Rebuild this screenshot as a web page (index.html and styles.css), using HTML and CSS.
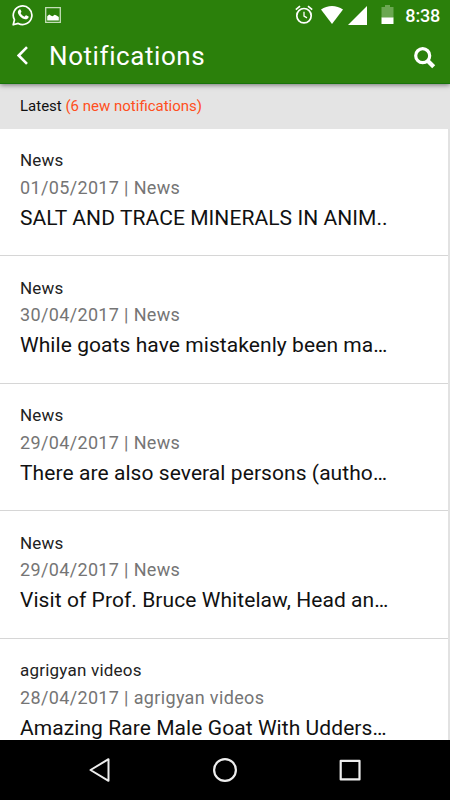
FILE: index.html
```html
<!DOCTYPE html>
<html lang="en">

<head>
    <meta charset="UTF-8" />
    <meta name="viewport" content="width=device-width, initial-scale=1.0" />
    <title>Notifications</title>
    <link rel="stylesheet" href="styles.css">
</head>

<body>

    <div class="screen">
        <header class="header">
            <div class="status">
                <svg class="status__whatsapp" width="22" height="22" viewBox="0 0 22 22" fill="none">
                    <path d="M1.2 20.8 2.5 15.8A9.3 9.3 0 1 1 6.2 19.4Z" stroke="#fff" stroke-width="1.7" stroke-linejoin="round" />
                    <path d="M7.4 5.6c.5-.4 1-.3 1.3.3l.7 1.7c.2.5-.5 1.1-.8 1.5.8 1.7 2.1 2.9 3.9 3.7l1.1-1.3c.3-.3.6-.3 1-.1l1.6.8c.6.3.5.7.3 1.3-.5 1.4-2 2-3.4 1.7-3.5-.8-6-3.1-7.1-6-.5-1.4.3-2.9 1.4-3.6Z" fill="#fff" />
                </svg>
                <svg class="status__image" width="16" height="16" viewBox="0 0 16 16">
                    <path d="M.7.7h14.6v14.6H.7Z" fill="none" stroke="#c4deb8" stroke-width="1.3" />
                    <path d="M2.2 13.5V9.3l2-1.8 2 1.3 1.3.5 2.2-1.5 1.8.8 2.3 1.5v3.4Z" fill="#fff" />
                </svg>
                <svg class="status__alarm" width="18" height="19" viewBox="0 0 18 19" fill="none" stroke="#fff">
                    <circle cx="9" cy="10.7" r="7.2" stroke-width="1.7" />
                    <path d="M9 6.8v4.3l3 1.8" stroke-width="1.3" />
                    <path d="M.8 4.6 5 1.2M17.2 4.6 13 1.2" stroke-width="1.7" />
                </svg>
                <svg class="status__wifi" width="22" height="18" viewBox="0 0 22 18">
                    <path d="M0 3.6C6.5-1.2 15.5-1.2 22 3.6L11 18Z" fill="#fff" />
                </svg>
                <svg class="status__signal" width="19" height="19" viewBox="0 0 19 19">
                    <path d="M0 19 19 0v19Z" fill="#fff" />
                </svg>
                <svg class="status__battery" width="13" height="19" viewBox="0 0 13 19">
                    <path d="M4 0h5v2h3.5v11H.5V2H4Z" fill="#6ba752" />
                    <path d="M.5 12.5h12V19H.5Z" fill="#fff" />
                </svg>
                <span class="status__time">8:38</span>
            </div>
            <div class="toolbar">
                <svg class="toolbar__back" width="12" height="19" viewBox="0 0 12 19" fill="none">
                    <path d="M10 1.2 1.7 9.5l8.3 8.3" stroke="#fff" stroke-width="2.6" />
                </svg>
                <h1 class="toolbar__title">Notifications</h1>
                <svg class="toolbar__search" width="22" height="22" viewBox="0 0 22 22" fill="none" stroke="#fff">
                    <circle cx="8.7" cy="8.7" r="7" stroke-width="3.2" />
                    <path d="m13.7 13.7 6 6" stroke-width="4.2" />
                </svg>
            </div>
        </header>

        <div class="latest">Latest <span class="latest__count">(6 new notifications)</span></div>

        <ul class="list">
            <li class="item">
                <p class="item__type">News</p>
                <p class="item__date">01/05/2017 | News</p>
                <h2 class="item__title">SALT AND TRACE MINERALS IN ANIM..</h2>
            </li>
            <li class="item">
                <p class="item__type">News</p>
                <p class="item__date">30/04/2017 | News</p>
                <h2 class="item__title">While goats have mistakenly been ma…</h2>
            </li>
            <li class="item">
                <p class="item__type">News</p>
                <p class="item__date">29/04/2017 | News</p>
                <h2 class="item__title">There are also several persons (autho…</h2>
            </li>
            <li class="item">
                <p class="item__type">News</p>
                <p class="item__date">29/04/2017 | News</p>
                <h2 class="item__title">Visit of Prof. Bruce Whitelaw, Head an…</h2>
            </li>
            <li class="item">
                <p class="item__type">agrigyan videos</p>
                <p class="item__date">28/04/2017 | agrigyan videos</p>
                <h2 class="item__title">Amazing Rare Male Goat With Udders…</h2>
            </li>
        </ul>

        <nav class="navbar">
            <svg width="24" height="26" viewBox="0 0 24 26" fill="none" stroke="#eee" stroke-width="2" stroke-linejoin="round">
                <path d="M21.5 2.2v21.6L3.5 13Z" />
            </svg>
            <svg width="26" height="26" viewBox="0 0 26 26" fill="none" stroke="#eee" stroke-width="2.2">
                <circle cx="13" cy="13" r="10.9" />
            </svg>
            <svg width="24" height="26" viewBox="0 0 24 26" fill="none" stroke="#eee" stroke-width="2.2" stroke-linejoin="round">
                <path d="M1.7 3.8h18.8v18.6H1.7Z" />
            </svg>
        </nav>
    </div>

</body>

</html>
```

FILE: styles.css
```css
* {
    box-sizing: border-box;
}

body {
    margin: 0;
    font-family: Roboto, "Liberation Sans", sans-serif;
    background: #fff;
}

h1,
h2,
p,
ul {
    margin: 0;
    padding: 0;
    font-weight: 400;
}

svg {
    display: block;
    flex: none;
}

.screen {
    display: flex;
    flex-direction: column;
    height: 800px;
    overflow: hidden;
}

.header {
    position: relative;
    z-index: 1;
    flex: none;
    height: 84px;
    background: #2b800b;
    color: #fff;
    border-bottom: 1px solid #177309;
    box-shadow: 0 1px 5px rgba(0, 0, 0, 0.5);
}

.status {
    display: flex;
    align-items: flex-start;
    height: 31px;
    padding: 5px 10px 0 12px;
}

.status__whatsapp {
    margin-top: -1px;
}

.status__image {
    margin: 2px auto 0 11px;
}

.status__alarm {
    margin-right: 8px;
}

.status__wifi {
    margin: 1px 5px 0 0;
}

.status__signal {
    margin: 1px 14px 0 0;
}

.status__battery {
    margin-right: 11px;
}

.status__time {
    font-size: 18px;
    line-height: 21px;
    font-weight: 500;
    letter-spacing: -0.2px;
}

.toolbar {
    display: flex;
    align-items: center;
    height: 50px;
    padding: 0 14px 0 17px;
}

.toolbar__title {
    flex: 1;
    margin-left: 20px;
    font-size: 26px;
    line-height: 30px;
    letter-spacing: 0.58px;
}

.toolbar__back {
    margin-top: -2px;
}

.toolbar__search {
    margin-top: 3px;
}

.latest {
    flex: none;
    height: 44.5px;
    padding: 0 20px;
    background: #e4e4e4;
    color: #111;
    font-size: 15px;
    line-height: 44px;
}

.latest__count {
    color: #ff4f20;
}

.list {
    flex: 1;
    min-height: 0;
    overflow: hidden;
    list-style: none;
    border-right: 2px solid #e2e2e2;
}

.item {
    height: 127.5px;
    padding: 19.5px 20px 0;
    border-bottom: 1px solid #d6d6d6;
}

.item__type {
    color: #222;
    font-size: 17px;
    line-height: 24px;
    letter-spacing: 0.22px;
}

.item__date {
    margin-top: 1.5px;
    color: #757575;
    font-size: 18px;
    line-height: 28px;
    letter-spacing: 0.35px;
}

.item__title {
    color: #111;
    font-size: 21px;
    line-height: 32px;
    letter-spacing: 0.07px;
    white-space: nowrap;
}

.navbar {
    display: flex;
    align-items: center;
    justify-content: center;
    gap: 101px;
    flex: none;
    height: 60px;
    background: #000;
}
```
